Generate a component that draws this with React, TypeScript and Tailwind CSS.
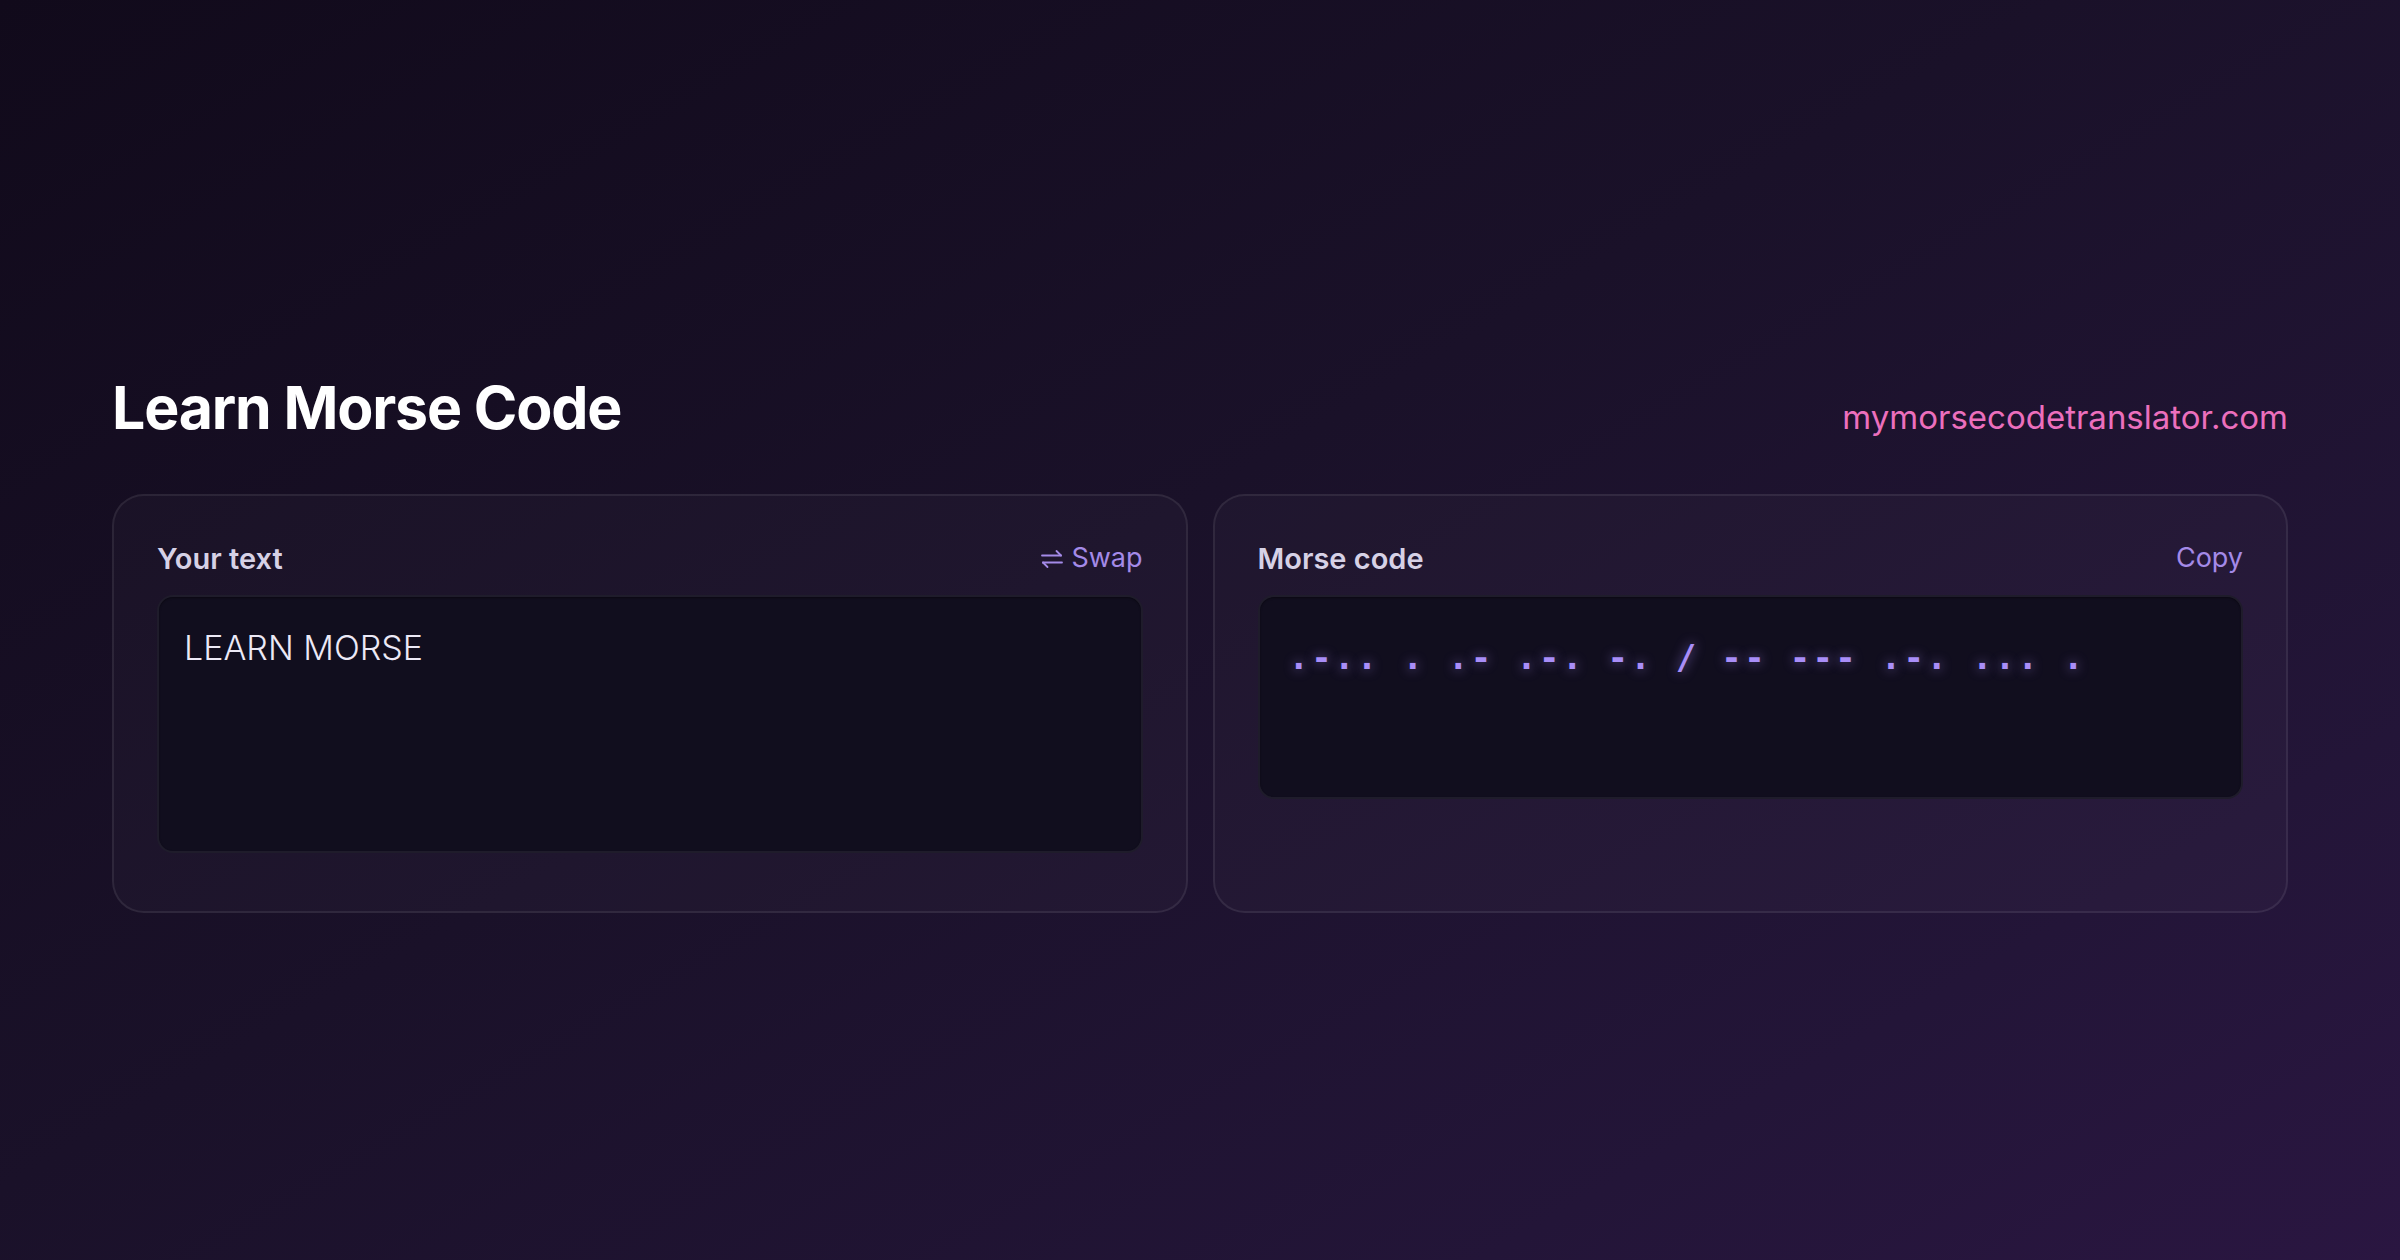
import React from "react";

function SwapIcon() {
  return (
    <svg width="24" height="20" viewBox="0 0 24 20" fill="none" stroke="currentColor" strokeWidth="1.8" strokeLinecap="round" strokeLinejoin="round">
      <path d="M2 6.5h19" />
      <path d="M16.5 2l4.5 4.5" />
      <path d="M22 13.5H3" />
      <path d="M7.5 18L3 13.5" />
    </svg>
  );
}

export default function App() {
  const morse = ".-.. . .- .-. -. / -- --- .-. ... .";
  return (
    <div
      className="min-h-screen w-full flex flex-col justify-center px-[112px] pt-[24px] bg-[linear-gradient(150deg,#110a1b_0%,#1a1129_45%,#231538_80%,#2a1641_100%)]"
      style={{ fontFamily: "Inter, 'Noto Sans', sans-serif" }}
    >
      <div className="flex items-baseline justify-between">
        <h1 className="text-[59px] leading-[72px] font-bold tracking-[-0.02em] text-white">
          Learn Morse Code
        </h1>
        <a className="text-[33px] text-[#ec6fbd] font-normal">mymorsecodetranslator.com</a>
      </div>
      <div className="mt-[50px] grid grid-cols-2 gap-[25px]">
        <div className="h-[419px] rounded-[32px] border-2 border-white/[0.08] bg-white/[0.025] px-[43px] pt-[43px]">
          <div className="flex items-center justify-between h-[40px]">
            <span className="text-[29px] font-semibold text-[#d6d1e6]">Your text</span>
            <button className="flex items-center gap-[7px] text-[27px] text-[#a48ae8]">
              <SwapIcon />
              <span>Swap</span>
            </button>
          </div>
          <div className="mt-[16px] h-[258px] rounded-[16px] border-2 border-white/[0.06] bg-[#110e1e] px-[25px] pt-[25px] shadow-[inset_0_1px_2px_rgba(0,0,0,0.4)]">
            <div className="text-[34px] leading-[52px] font-light text-[#ece9f6]">LEARN MORSE</div>
          </div>
        </div>
        <div className="h-[419px] rounded-[32px] border-2 border-white/[0.08] bg-white/[0.025] px-[43px] pt-[43px]">
          <div className="flex items-center justify-between h-[40px]">
            <span className="text-[29px] font-semibold text-[#d6d1e6]">Morse code</span>
            <button className="text-[27px] text-[#a48ae8]">Copy</button>
          </div>
          <div className="mt-[16px] h-[204px] rounded-[16px] border-2 border-white/[0.06] bg-[#110e1e] px-[29px] pt-[36px] shadow-[inset_0_1px_2px_rgba(0,0,0,0.4)]">
            <div
              className="text-[34px] leading-[48px] font-bold tracking-[0.068em] text-[#a98ef8] [text-shadow:0_0_12px_rgba(167,139,250,0.7)] whitespace-pre"
              style={{ fontFamily: "'DejaVu Sans Mono', 'Liberation Mono', monospace" }}
            >
              {morse}
            </div>
          </div>
        </div>
      </div>
    </div>
  );
}
